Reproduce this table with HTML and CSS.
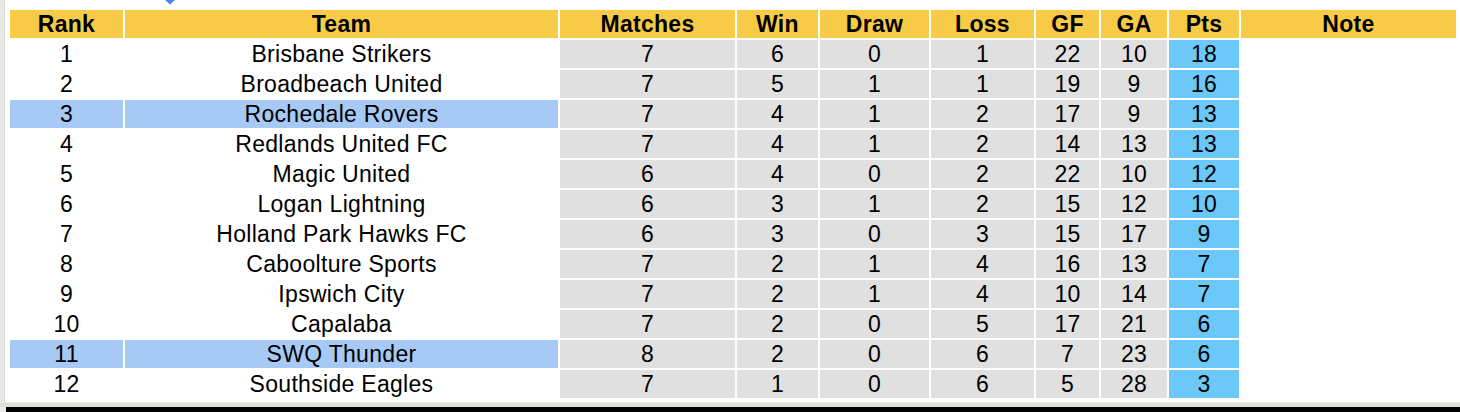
FILE: index.html
```html
<!DOCTYPE html>
<html>
<head>
<meta charset="utf-8">
<link rel="stylesheet" href="styles.css">
</head>
<body>
<div class="window">
  <svg class="caret" width="14" height="6" viewBox="0 0 14 6"><polygon points="2,0 12,0 7,4.5" fill="#4a86e8"/></svg>
  <table class="ladder">
    <colgroup>
      <col class="c-rank"><col class="c-team"><col class="c-mat"><col class="c-win"><col class="c-draw"><col class="c-loss"><col class="c-gf"><col class="c-ga"><col class="c-pts"><col class="c-note">
    </colgroup>
    <thead>
      <tr><th>Rank</th><th>Team</th><th>Matches</th><th>Win</th><th>Draw</th><th>Loss</th><th>GF</th><th>GA</th><th>Pts</th><th>Note</th></tr>
    </thead>
    <tbody>
      <tr><td>1</td><td>Brisbane Strikers</td><td class="n">7</td><td class="n">6</td><td class="n">0</td><td class="n">1</td><td class="n">22</td><td class="n">10</td><td class="p">18</td><td></td></tr>
      <tr><td>2</td><td>Broadbeach United</td><td class="n">7</td><td class="n">5</td><td class="n">1</td><td class="n">1</td><td class="n">19</td><td class="n">9</td><td class="p">16</td><td></td></tr>
      <tr class="hl"><td>3</td><td>Rochedale Rovers</td><td class="n">7</td><td class="n">4</td><td class="n">1</td><td class="n">2</td><td class="n">17</td><td class="n">9</td><td class="p">13</td><td></td></tr>
      <tr><td>4</td><td>Redlands United FC</td><td class="n">7</td><td class="n">4</td><td class="n">1</td><td class="n">2</td><td class="n">14</td><td class="n">13</td><td class="p">13</td><td></td></tr>
      <tr><td>5</td><td>Magic United</td><td class="n">6</td><td class="n">4</td><td class="n">0</td><td class="n">2</td><td class="n">22</td><td class="n">10</td><td class="p">12</td><td></td></tr>
      <tr><td>6</td><td>Logan Lightning</td><td class="n">6</td><td class="n">3</td><td class="n">1</td><td class="n">2</td><td class="n">15</td><td class="n">12</td><td class="p">10</td><td></td></tr>
      <tr><td>7</td><td>Holland Park Hawks FC</td><td class="n">6</td><td class="n">3</td><td class="n">0</td><td class="n">3</td><td class="n">15</td><td class="n">17</td><td class="p">9</td><td></td></tr>
      <tr><td>8</td><td>Caboolture Sports</td><td class="n">7</td><td class="n">2</td><td class="n">1</td><td class="n">4</td><td class="n">16</td><td class="n">13</td><td class="p">7</td><td></td></tr>
      <tr><td>9</td><td>Ipswich City</td><td class="n">7</td><td class="n">2</td><td class="n">1</td><td class="n">4</td><td class="n">10</td><td class="n">14</td><td class="p">7</td><td></td></tr>
      <tr><td>10</td><td>Capalaba</td><td class="n">7</td><td class="n">2</td><td class="n">0</td><td class="n">5</td><td class="n">17</td><td class="n">21</td><td class="p">6</td><td></td></tr>
      <tr class="hl"><td>11</td><td>SWQ Thunder</td><td class="n">8</td><td class="n">2</td><td class="n">0</td><td class="n">6</td><td class="n">7</td><td class="n">23</td><td class="p">6</td><td></td></tr>
      <tr><td>12</td><td>Southside Eagles</td><td class="n">7</td><td class="n">1</td><td class="n">0</td><td class="n">6</td><td class="n">5</td><td class="n">28</td><td class="p">3</td><td></td></tr>
    </tbody>
  </table>
</div>
<div class="bottom-rule"></div>
<div class="bottom-bar"></div>
</body>
</html>
```

FILE: styles.css
```css
html, body {
  margin: 0;
  padding: 0;
}
body {
  width: 1460px;
  height: 412px;
  overflow: hidden;
  background: #e8e8e5;
  font-family: "Liberation Sans", Arial, sans-serif;
  color: #000;
}
.window {
  position: relative;
  height: 394px;
  padding: 8px 0 0 3px;
  background: #fff;
  border-left: 1px solid #dcdcd8;
  margin-left: 4px;
}
.caret {
  position: absolute;
  left: 158px;
  top: 0;
}
.ladder {
  border-collapse: separate;
  border-spacing: 2px;
  table-layout: fixed;
  width: 1450px;
  font-size: 23px;
  letter-spacing: 0.3px;
}
.c-rank { width: 113px; }
.c-team { width: 433px; }
.c-mat { width: 175px; }
.c-win { width: 81px; }
.c-draw { width: 109px; }
.c-loss { width: 103px; }
.c-gf { width: 63px; }
.c-ga { width: 66px; }
.c-pts { width: 70px; }
.c-note { width: 215px; }
.ladder th,
.ladder td {
  height: 28px;
  padding: 0;
  line-height: 28px;
  text-align: center;
  white-space: nowrap;
  overflow: hidden;
}
.ladder th {
  background: #f8cb47;
  font-weight: bold;
}
.ladder td.n {
  background: #e0e0e0;
}
.ladder td.p {
  background: #6cc8f8;
}
.ladder tr.hl td:nth-child(1),
.ladder tr.hl td:nth-child(2) {
  background: #a6c9f6;
}
.bottom-rule {
  height: 4px;
  background: #dededb;
  border-top: 1px solid #ebebe8;
}
.bottom-bar {
  height: 13px;
  margin-left: 6px;
  background: #000;
}
```
